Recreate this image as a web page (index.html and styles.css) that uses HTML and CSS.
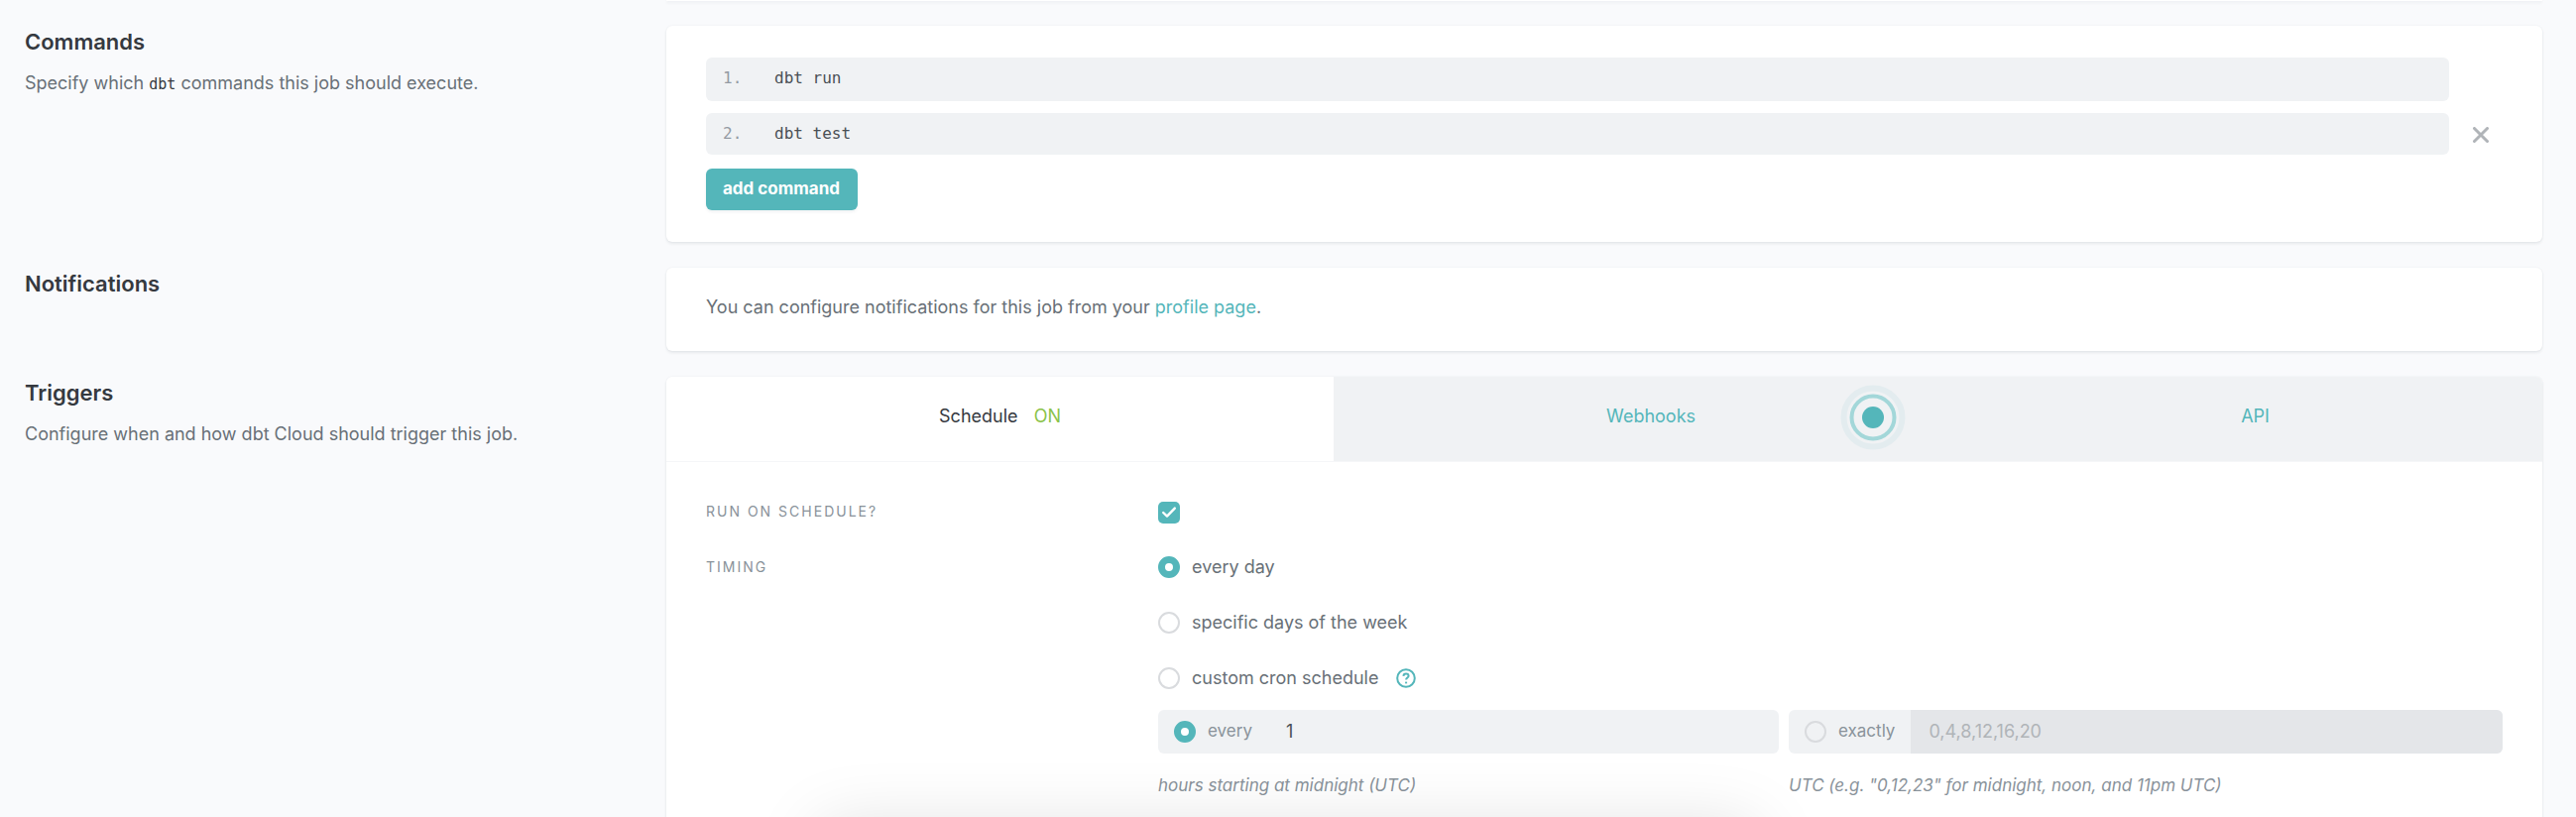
FILE: index.html
```html
<!DOCTYPE html>
<html lang="en">
<head>
<meta charset="utf-8">
<title>Job settings</title>
<link rel="stylesheet" href="styles.css">
</head>
<body>
<main class="page">
  <section class="section section-previous">
    <div class="intro"></div>
    <div class="card"></div>
  </section>

  <section class="section">
    <div class="intro">
      <h2 class="title">Commands</h2>
      <p class="description">Specify which <code class="code">dbt</code> commands this job should execute.</p>
    </div>
    <div class="card card-commands">
      <div class="command">
        <div class="command-field command-field-first">
          <label class="command-number" for="command-1">1.</label>
          <input class="command-input" id="command-1" type="text" value="dbt run">
        </div>
      </div>
      <div class="command">
        <div class="command-field">
          <label class="command-number" for="command-2">2.</label>
          <input class="command-input" id="command-2" type="text" value="dbt test">
        </div>
        <button class="remove" type="button" aria-label="Remove command">
          <svg class="remove-icon" viewBox="0 0 16 16"><path d="M1.5 1.5 14.5 14.5M14.5 1.5 1.5 14.5"/></svg>
        </button>
      </div>
      <button class="add" type="button">add command</button>
    </div>
  </section>

  <section class="section">
    <div class="intro">
      <h2 class="title">Notifications</h2>
    </div>
    <div class="card card-notice">
      <p class="notice">You can configure notifications for this job from your <a class="link" href="#profile">profile page</a>.</p>
    </div>
  </section>

  <section class="section">
    <div class="intro">
      <h2 class="title">Triggers</h2>
      <p class="description">Configure when and how dbt Cloud should trigger this job.</p>
    </div>
    <div class="card">
      <div class="tabs" role="tablist">
        <button class="tab tab-active" type="button" role="tab" aria-selected="true">Schedule <span class="state">ON</span></button>
        <button class="tab" type="button" role="tab" aria-selected="false">Webhooks
          <svg class="pulse" viewBox="0 0 66 66" aria-hidden="true">
            <circle class="pulse-outer" cx="33" cy="33" r="29.5"/>
            <circle class="pulse-ring" cx="33" cy="33" r="21.5"/>
            <circle class="pulse-dot" cx="33" cy="33" r="11"/>
          </svg>
        </button>
        <button class="tab" type="button" role="tab" aria-selected="false">API</button>
      </div>
      <div class="schedule">
        <label class="caption" for="run-on-schedule">RUN ON SCHEDULE?</label>
        <div class="row row-check">
          <span class="check">
            <input class="check-box" id="run-on-schedule" type="checkbox" checked>
            <svg class="check-mark" viewBox="0 0 22 22"><path d="M5.2 11 9 14.6 16.8 6.6"/></svg>
          </span>
        </div>
        <span class="caption" id="timing">TIMING</span>
        <div class="timing" role="group" aria-labelledby="timing">
          <div class="row">
            <input class="radio" id="every-day" type="radio" name="timing" checked>
            <label class="option" for="every-day">every day</label>
          </div>
          <div class="row">
            <input class="radio" id="specific-days" type="radio" name="timing">
            <label class="option" for="specific-days">specific days of the week</label>
          </div>
          <div class="row">
            <input class="radio" id="custom-cron" type="radio" name="timing">
            <label class="option" for="custom-cron">custom cron schedule</label>
            <svg class="help" viewBox="0 0 20 20" role="img" aria-label="Help">
              <circle cx="10" cy="10" r="8.8"/>
              <path d="M7.4 7.9C7.5 6.3 8.6 5.4 10 5.4S12.6 6.4 12.6 7.8C12.6 9.5 10.1 9.7 10.1 11.6"/>
              <path d="M10.1 13.6V15.4"/>
            </svg>
          </div>
          <div class="hours">
            <div class="hours-every">
              <div class="field">
                <span class="field-label">
                  <input class="radio" id="every" type="radio" name="hours" checked>
                  <label class="field-name" for="every">every</label>
                </span>
                <input class="field-input" type="text" value="1" aria-label="Hour interval">
              </div>
              <p class="hint">hours starting at midnight (UTC)</p>
            </div>
            <div class="hours-exactly">
              <div class="field">
                <span class="field-label">
                  <input class="radio" id="exactly" type="radio" name="hours">
                  <label class="field-name" for="exactly">exactly</label>
                </span>
                <input class="field-input" type="text" placeholder="0,4,8,12,16,20" aria-label="Exact hours" disabled>
              </div>
              <p class="hint">UTC (e.g. "0,12,23" for midnight, noon, and 11pm UTC)</p>
            </div>
          </div>
        </div>
      </div>
    </div>
  </section>
</main>
<div class="drawer"></div>
</body>
</html>
```
FILE: styles.css
```css
* {
  box-sizing: border-box;
}

html,
body {
  height: 100%;
  margin: 0;
  overflow: hidden;
}

body {
  background: #f9fafc;
  color: #687077;
  font: 18px/28px Inter, "Liberation Sans", sans-serif;
}

button,
input {
  margin: 0;
  padding: 0;
  border: 0;
  background: none;
  font: inherit;
  color: inherit;
}

.page {
  display: flex;
  flex-direction: column;
  gap: 26px;
  padding: 0 34px 0 25px;
}

.section {
  display: grid;
  grid-template-columns: 647fr 1892fr;
}

.section-previous {
  height: 1px;
  margin-bottom: -1px;
}

.title {
  margin: 4px 0 16px;
  color: #35393f;
  font-size: 22px;
  line-height: 24px;
  font-weight: 600;
}

.description {
  margin: 0;
}

.code {
  color: #35393f;
  font: 15px/20px "DejaVu Sans Mono", monospace;
}

.card {
  min-width: 0;
  border-radius: 6px;
  background: #fff;
  box-shadow: 0 2px 3px rgba(40, 50, 60, 0.08), 0 0 2px rgba(40, 50, 60, 0.08);
}

.card-commands {
  display: flex;
  flex-direction: column;
  align-items: stretch;
  gap: 12px;
  padding: 32px 40px;
}

.command {
  display: flex;
  align-items: center;
}

.command-field {
  display: flex;
  flex: 1;
  align-items: center;
  height: 42px;
  margin-right: 54px;
  padding: 0 17px;
  border-radius: 6px;
  background: #f0f2f4;
  font: 16px/24px "DejaVu Sans Mono", monospace;
}

.command-field-first {
  height: 44px;
  padding-bottom: 3px;
}

.command-number {
  width: 52px;
  color: #949ba3;
}

.command-input {
  flex: 1;
  color: #4a5056;
}

.remove {
  display: flex;
  width: 16px;
  margin: 0 14px 0 -30px;
  padding-top: 2px;
}

.remove-icon {
  width: 16px;
  height: 16px;
  fill: none;
  stroke: #b0b4b8;
  stroke-width: 3;
  stroke-linecap: round;
}

.add {
  align-self: flex-start;
  margin-top: 2px;
  padding: 6px 18px 8px 17px;
  border-radius: 6px;
  background: #54b6ba;
  box-shadow: 0 2px 3px rgba(40, 50, 60, 0.06);
  color: #fff;
  font-size: 17px;
  font-weight: 700;
}

.card-notice {
  padding: 26px 40px 30px;
}

.notice {
  margin: 0;
}

.link {
  color: #54b6ba;
  text-decoration: none;
}

.tabs {
  display: flex;
  border-bottom: 1px solid #f5f6f8;
  border-radius: 6px 6px 0 0;
  background: #f0f2f4;
  overflow: hidden;
}

.tab {
  position: relative;
  flex: 1 1 auto;
  padding: 26px 24px 31px;
  color: #54b6ba;
}

.tab-active {
  background: #fff;
  color: #35393f;
}

.state {
  margin-left: 11px;
  color: #8bc34a;
}

.pulse {
  position: absolute;
  top: 8px;
  right: 63px;
  width: 66px;
  height: 66px;
  fill: none;
}

.pulse-outer {
  stroke: #e3ecef;
  stroke-width: 6;
}

.pulse-ring {
  stroke: #a3d7d9;
  stroke-width: 4;
}

.pulse-dot {
  fill: #54b6ba;
}

.schedule {
  display: grid;
  grid-template-columns: 456fr 1356fr;
  padding: 36px 40px 60px;
}

.caption {
  color: #89929a;
  font-size: 14px;
  line-height: 28px;
  letter-spacing: 2px;
}

.row {
  display: flex;
  align-items: center;
  gap: 12px;
  height: 28px;
}

.row-check {
  margin-bottom: 28px;
  padding-top: 2px;
}

.timing {
  display: flex;
  flex-direction: column;
  gap: 28px;
}

.check {
  display: grid;
}

.check-box,
.check-mark {
  grid-area: 1 / 1;
  width: 22px;
  height: 22px;
}

.check-box {
  appearance: none;
  border-radius: 5px;
  background: #54b6ba;
}

.check-mark {
  fill: none;
  stroke: #fff;
  stroke-width: 2.4;
  stroke-linecap: round;
  stroke-linejoin: round;
  pointer-events: none;
}

.radio {
  appearance: none;
  flex: none;
  width: 22px;
  height: 22px;
  border: 2px solid #d9dbde;
  border-radius: 50%;
}

.radio:checked {
  border: 7px solid #54b6ba;
  background: #fff;
}

.help {
  width: 20px;
  height: 20px;
  margin-left: 6px;
  fill: none;
  stroke: #54b6ba;
  stroke-width: 2;
}

.hours {
  display: flex;
  gap: 10px;
  margin-top: -10px;
}

.hours-every {
  flex: 626 1 0;
}

.hours-exactly {
  flex: 720 1 0;
}

.field {
  display: flex;
  height: 44px;
  border-radius: 6px;
  background: #f0f2f4;
  overflow: hidden;
}

.field-label {
  display: flex;
  align-items: center;
  gap: 12px;
  padding: 0 16px;
  color: #89929a;
  font-size: 17px;
}

.field-name {
  padding-bottom: 2px;
}

.field-input {
  flex: 1;
  min-width: 0;
  padding: 0 18px;
  color: #4a5056;
}

.field-input:disabled {
  background: #e4e6e9;
}

.field-input::placeholder {
  color: #b0b4b8;
}

.hint {
  margin: 18px 0 0;
  color: #89929a;
  font-size: 17px;
  font-style: italic;
}

.drawer {
  position: fixed;
  bottom: -140px;
  left: 33%;
  right: 33%;
  height: 100px;
  box-shadow: 0 0 70px 30px rgba(0, 0, 0, 0.13);
}
```
